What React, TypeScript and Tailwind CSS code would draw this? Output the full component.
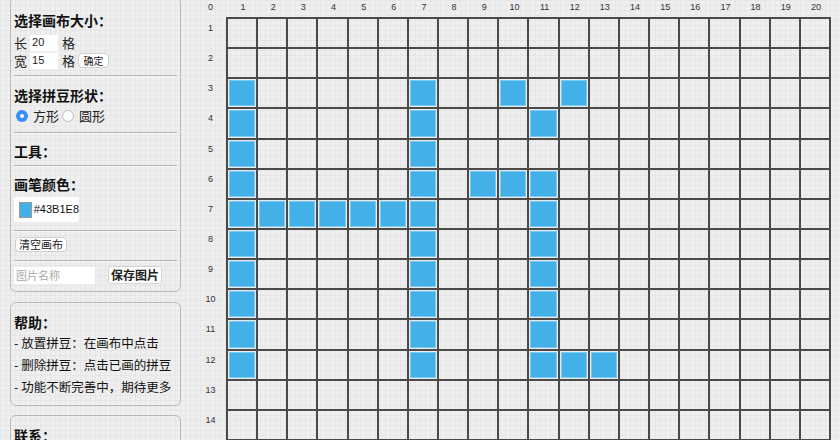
import React from "react";

const filledList: [number, number][] = [
  [1, 3], [7, 3], [10, 3], [12, 3],
  [1, 4], [7, 4], [11, 4],
  [1, 5], [7, 5],
  [1, 6], [7, 6], [9, 6], [10, 6], [11, 6],
  [1, 7], [2, 7], [3, 7], [4, 7], [5, 7], [6, 7], [7, 7], [11, 7],
  [1, 8], [7, 8], [11, 8],
  [1, 9], [7, 9], [11, 9],
  [1, 10], [7, 10], [11, 10],
  [1, 11], [7, 11], [11, 11],
  [1, 12], [7, 12], [11, 12], [12, 12], [13, 12],
];
const filled = new Set(filledList.map(([c, r]) => `${c},${r}`));

const COLS = 20;
const ROWS = 15;

function Hr() {
  return <div className="h-[2px] border-t border-t-[#b3b3b3] border-b border-b-[#f7f7f7]" />;
}

function Title({ children, className = "" }: { children: React.ReactNode; className?: string }) {
  return <div className={`text-[14px] leading-[20px] font-bold text-[#111] ${className}`}>{children}</div>;
}

export default function App() {
  const cols = Array.from({ length: COLS }, (_, i) => i + 1);
  const rows = Array.from({ length: ROWS }, (_, i) => i + 1);
  return (
    <div className="h-[440px] w-[840px] overflow-hidden flex items-start bg-[#efefef] bg-[linear-gradient(to_right,#e6e6e6_1px,transparent_1px),linear-gradient(to_bottom,#e6e6e6_1px,transparent_1px)] bg-[size:5px_5px] font-['Noto_Sans_CJK_SC',sans-serif] text-[#222]">
      {/* Left column */}
      <div className="ml-[10px] w-[171px] shrink-0 flex flex-col">
        <div className="shrink-0 -mt-[3px] border border-[#b9b9b9] rounded-[6px] px-[3px] pb-[7px]">
          <Title className="mt-[12px]">选择画布大小：</Title>
          <div className="mt-[4px] h-[17px] flex items-center text-[13px]">
            <span>长</span>
            <input
              defaultValue="20"
              readOnly
              className="ml-[3px] w-[28px] h-[16px] bg-white text-[11px] pl-[2px] outline-none font-['Liberation_Sans',sans-serif]"
            />
            <span className="ml-[4px]">格</span>
          </div>
          <div className="mt-px h-[17px] flex items-center text-[13px]">
            <span>宽</span>
            <input
              defaultValue="15"
              readOnly
              className="ml-[3px] w-[28px] h-[16px] bg-white text-[11px] pl-[2px] outline-none font-['Liberation_Sans',sans-serif]"
            />
            <span className="ml-[4px]">格</span>
            <button className="ml-[3px] w-[31px] h-[15px] bg-white border border-[#cfcfcf] rounded-[4px] text-[10px] leading-[13px] flex items-center justify-center">
              确定
            </button>
          </div>
          <div className="mt-[6px]"><Hr /></div>

          <Title className="mt-[8px]">选择拼豆形状：</Title>
          <div className="mt-[3px] h-[16px] flex items-center text-[13px]">
            <span className="ml-[2px] w-[12px] h-[12px] rounded-full bg-[#3a8ef6] flex items-center justify-center">
              <span className="w-[4px] h-[4px] rounded-full bg-white" />
            </span>
            <span className="ml-[5px]">方形</span>
            <span className="ml-[3px] w-[12px] h-[12px] rounded-full bg-white border border-[#bdbdbd]" />
            <span className="ml-[5px]">圆形</span>
          </div>
          <div className="mt-[8px]"><Hr /></div>

          <Title className="mt-[7px]">工具：</Title>
          <div className="mt-[4px]"><Hr /></div>

          <Title className="mt-[7px]">画笔颜色：</Title>
          <div className="mt-[3px] h-[25px] w-[65px] bg-white rounded-[3px] flex items-center">
            <span className="ml-[5px] w-[16px] h-[16px] bg-[#43B1E8] border border-[#9a9a9a]" />
            <span className="ml-[2px] text-[11px] font-['Liberation_Sans',sans-serif] text-[#111]">#43B1E8</span>
          </div>
          <div className="mt-[8px]"><Hr /></div>

          <button className="mt-[5px] ml-px w-[52px] h-[15px] bg-white border border-[#cfcfcf] rounded-[4px] text-[11px] leading-[13px] flex items-center justify-center">
            清空画布
          </button>
          <div className="mt-[8px]"><Hr /></div>

          <div className="mt-[4px] h-[18px] flex items-center">
            <input
              placeholder="图片名称"
              readOnly
              className="w-[81px] h-[17px] bg-white text-[11px] pl-[2px] outline-none placeholder:text-[#a9a9a9]"
            />
            <button className="ml-[13px] w-[54px] h-[18px] bg-white border border-[#d5d5d5] rounded-[3px] text-[12px] leading-[16px] font-bold flex items-center justify-center">
              保存图片
            </button>
          </div>
        </div>

        <div className="shrink-0 mt-[10px] border border-[#b9b9b9] rounded-[6px] px-[3px] pb-[7px]">
          <Title className="mt-[9px]">帮助：</Title>
          <div className="text-[12.5px] leading-[22px] text-[#111]">- 放置拼豆：在画布中点击</div>
          <div className="text-[12.5px] leading-[22px] text-[#111]">- 删除拼豆：点击已画的拼豆</div>
          <div className="text-[12.5px] leading-[22px] text-[#111]">- 功能不断完善中，期待更多</div>
        </div>

        <div className="shrink-0 mt-[9px] border border-[#b9b9b9] rounded-[6px] px-[3px] pb-[40px]">
          <Title className="mt-[9px]">联系：</Title>
        </div>
      </div>

      {/* Board */}
      <div className="ml-[14px] shrink-0 flex flex-col font-['Liberation_Sans',sans-serif] text-[9px] text-[#333]">
        <div className="h-[17px] shrink-0 flex">
          <div className="w-[31px] pt-px leading-[12px] text-center">0</div>
          <div className="w-[605px] pl-[2px] grid grid-cols-[repeat(20,1fr)]">
            {cols.map((c) => (
              <div key={c} className="pt-px leading-[12px] text-center">{c}</div>
            ))}
          </div>
        </div>
        <div className="flex shrink-0">
          <div className="w-[31px] pt-[2px] grid auto-rows-[30.15px]">
            {rows.map((r) => (
              <div key={r} className="pt-[3px] leading-[12px] text-center">{r}</div>
            ))}
          </div>
          <div className="w-[605px] border-l-2 border-t-2 border-[#4a4a4a] grid grid-cols-[repeat(20,1fr)] auto-rows-[30.15px]">
            {rows.map((r) =>
              cols.map((c) => (
                <div key={`${c}-${r}`} className="border-r-2 border-b-2 border-[#4a4a4a] p-px">
                  {filled.has(`${c},${r}`) && (
                    <div className="w-full h-full bg-[#43B1E8] border border-[#78cbf2]" />
                  )}
                </div>
              ))
            )}
          </div>
        </div>
      </div>
    </div>
  );
}
